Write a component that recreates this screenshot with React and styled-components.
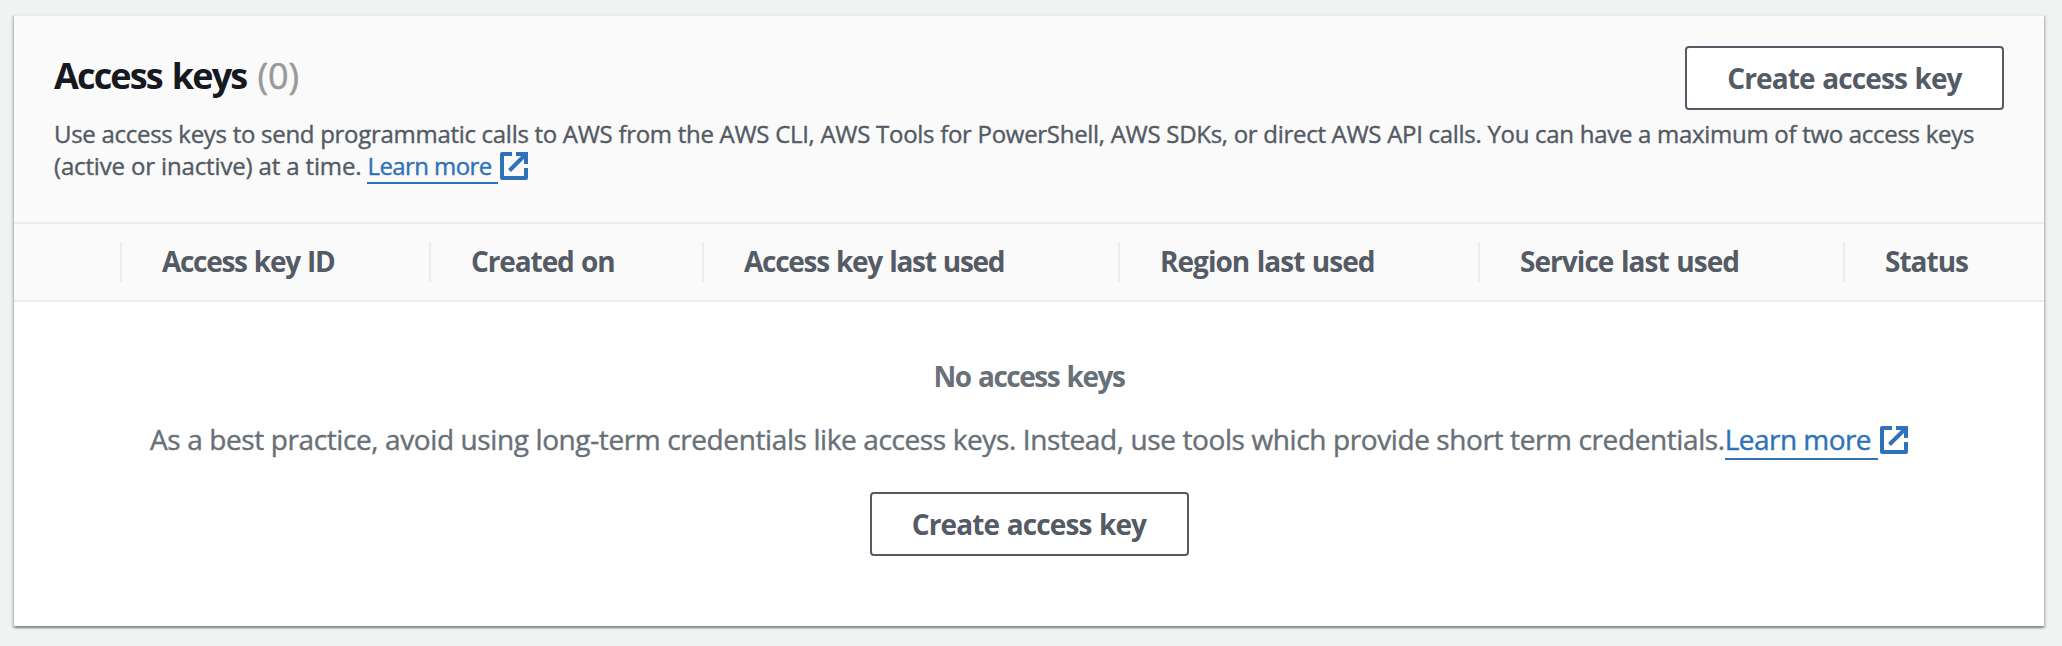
import React from "react";
import styled, { createGlobalStyle } from "styled-components";

const GlobalStyle = createGlobalStyle`
  * { box-sizing: border-box; }
  body {
    margin: 0;
    background: #f1f3f3;
    color: #545b64;
    font-family: "Open Sans", "Noto Sans", sans-serif;
  }
`;

const Page = styled.main`
  height: 646px;
  padding: 14px 18px 20px 14px;
  overflow: hidden;
`;

const Card = styled.section`
  display: flex;
  flex-direction: column;
  height: 612px;
  background: #fff;
  border-top: 2px solid #eaeded;
  box-shadow:
    0 2px 2px rgba(0, 28, 36, 0.3),
    2px 2px 2px rgba(0, 28, 36, 0.15),
    -2px 2px 2px rgba(0, 28, 36, 0.15);
`;

const CardHeader = styled.header`
  height: 208px;
  padding: 30px 40px 0;
  background: #fafafa;
  border-bottom: 2px solid #eaeded;
`;

const TitleRow = styled.div`
  display: flex;
  justify-content: space-between;
  align-items: flex-start;
  height: 64px;
`;

const Title = styled.h2`
  margin: 8px 0 0;
  color: #16191f;
  font-size: 36px;
  line-height: 44px;
  font-weight: 700;
  letter-spacing: -1.85px;
  word-spacing: 2.5px;
  white-space: nowrap;
`;

const Counter = styled.span`
  margin-left: 11px;
  color: #999;
  font-weight: 400;
  letter-spacing: -0.1px;
  -webkit-text-stroke: 0.5px currentColor;
`;

const Description = styled.div`
  display: flex;
  flex-direction: column;
  margin-top: 8px;
  font-size: 24px;
  line-height: 32px;
  -webkit-text-stroke: 0.4px currentColor;
`;

const DescriptionLine = styled.span`
  height: 32px;
  letter-spacing: ${(p) => p.$tracking};
  white-space: nowrap;
`;

const Link = styled.a`
  color: #2f72b8;
  text-decoration: none;
  letter-spacing: ${(p) => p.$tracking};
  white-space: nowrap;
`;

const LinkText = styled.span`
  padding-right: ${(p) => p.$gap};
  border-bottom: 2px solid currentColor;
`;

const LinkIcon = styled.svg`
  width: 28px;
  height: 28px;
  margin-left: 2px;
  vertical-align: ${(p) => p.$drop};
  fill: none;
  stroke: currentColor;
  stroke-width: 4;
`;

const Button = styled.button`
  width: 319px;
  height: 64px;
  padding: 10px 0;
  border: 2px solid #545b64;
  border-radius: 4px;
  background: #fff;
  color: #545b64;
  font: 700 28px/40px "Open Sans", sans-serif;
  letter-spacing: -0.9px;
  word-spacing: 1.2px;
  white-space: nowrap;
`;

const ColumnRow = styled.div`
  display: grid;
  grid-template-columns: 106px 309px 273px 416px 360px 365px 1fr;
  padding: 18px 0;
  background: #fafafa;
  border-bottom: 2px solid #eaeded;
`;

const Column = styled.div`
  height: 40px;
  padding-left: 40px;
  border-left: 2px solid #eaeded;
  font-size: 28px;
  line-height: 39px;
  font-weight: 700;
  letter-spacing: ${(p) => p.$tracking};
  word-spacing: 1.2px;
  white-space: nowrap;

  &:first-child { border-left: 0; }
`;

const Empty = styled.div`
  display: flex;
  flex-direction: column;
  align-items: center;
  padding-top: 54px;
  color: #687078;
  font-size: 28px;
  line-height: 40px;
`;

const EmptyTitle = styled.strong`
  font-weight: 700;
  letter-spacing: -1.45px;
  word-spacing: 1.4px;
`;

const EmptyText = styled.p`
  margin: 23px 0 33px;
  letter-spacing: -0.39px;
  white-space: nowrap;
  -webkit-text-stroke: 0.4px currentColor;
`;

const columns = [
  { label: "", tracking: "0" },
  { label: "Access key ID", tracking: "-1.3px" },
  { label: "Created on", tracking: "-1.1px" },
  { label: "Access key last used", tracking: "-1.28px" },
  { label: "Region last used", tracking: "-0.98px" },
  { label: "Service last used", tracking: "-0.95px" },
  { label: "Status", tracking: "-1px" },
];

function LearnMore({ tracking, gap, drop }) {
  return (
    <Link $tracking={tracking}>
      <LinkText $gap={gap}>Learn more</LinkText>
      <LinkIcon $drop={drop} viewBox="0 0 28 28" aria-hidden="true">
        <path d="M12 2H2V26H26V16" strokeLinejoin="round" />
        <path d="M16 2H26V12M26 2L9.5 18.5" />
      </LinkIcon>
    </Link>
  );
}

export default function App() {
  return (
    <Page>
      <GlobalStyle />
      <Card>
        <CardHeader>
          <TitleRow>
            <Title>
              Access keys<Counter>(0)</Counter>
            </Title>
            <Button>Create access key</Button>
          </TitleRow>
          <Description>
            <DescriptionLine $tracking="-0.29px">
              Use access keys to send programmatic calls to AWS from the AWS CLI, AWS Tools for
              PowerShell, AWS SDKs, or direct AWS API calls. You can have a maximum of two access
              keys
            </DescriptionLine>
            <DescriptionLine $tracking="-0.15px">
              (active or inactive) at a time.{" "}
              <LearnMore tracking="-0.58px" gap="6px" drop="-5px" />
            </DescriptionLine>
          </Description>
        </CardHeader>
        <ColumnRow>
          {columns.map((c) => (
            <Column key={c.label} $tracking={c.tracking}>{c.label}</Column>
          ))}
        </ColumnRow>
        <Empty>
          <EmptyTitle>No access keys</EmptyTitle>
          <EmptyText>
            As a best practice, avoid using long-term credentials like access keys. Instead, use
            tools which provide short term credentials.
            <LearnMore tracking="-0.55px" gap="7px" drop="-4px" />
          </EmptyText>
          <Button>Create access key</Button>
        </Empty>
      </Card>
    </Page>
  );
}
